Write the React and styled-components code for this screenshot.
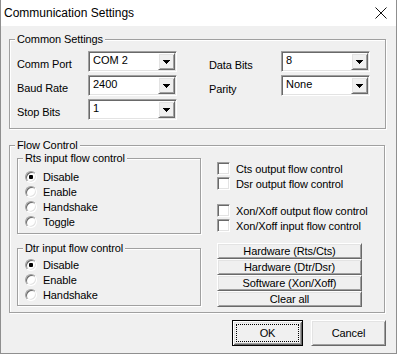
import styled, { createGlobalStyle } from 'styled-components';

const GlobalStyle = createGlobalStyle`
  html, body {
    margin: 0;
    padding: 0;
    background: #ffffff;
  }
  body {
    font-family: "Liberation Sans", Arial, sans-serif;
    color: #000;
  }
  *, *::before, *::after {
    box-sizing: border-box;
  }
`;

const DropArrow = () => (
  <svg width="7" height="4" viewBox="0 0 7 4" shapeRendering="crispEdges">
    <path d="M0 0h7v1h-1v1h-1v1h-1v1h-1v-1h-1v-1h-1v-1h-1z" fill="#000" />
  </svg>
);

const CloseIcon = () => (
  <svg width="12" height="12" viewBox="0 0 12 12">
    <path d="M0.5 0.5L11.5 11.5M11.5 0.5L0.5 11.5" stroke="#111" strokeWidth="1" fill="none" />
  </svg>
);

const ComboBox = ({ value }) => (
  <Combo>
    <ComboText>{value}</ComboText>
    <DropButton>
      <DropArrow />
    </DropButton>
  </Combo>
);

const Radio = ({ label, checked }) => (
  <RadioRow>
    <RadioCircle>{checked && <RadioDot />}</RadioCircle>
    <span>{label}</span>
  </RadioRow>
);

const Check = ({ label, gap }) => (
  <CheckRow $gap={gap}>
    <CheckBox />
    <span>{label}</span>
  </CheckRow>
);

function App() {
  return (
    <>
      <GlobalStyle />
      <Window>
        <TitleBar>
          <Title>Communication Settings</Title>
          <CloseButton>
            <CloseIcon />
          </CloseButton>
        </TitleBar>

        <Body>
          <GroupBox $height={90}>
            <Caption>Common Settings</Caption>
            <CommonBody>
              <FieldGrid $labelWidth={71}>
                <FieldLabel>Comm Port</FieldLabel>
                <ComboBox value="COM 2" />
                <FieldLabel>Baud Rate</FieldLabel>
                <ComboBox value="2400" />
                <FieldLabel>Stop Bits</FieldLabel>
                <ComboBox value="1" />
              </FieldGrid>
              <FieldGrid $labelWidth={72}>
                <FieldLabel $lower>Data Bits</FieldLabel>
                <ComboBox value="8" />
                <FieldLabel $lower>Parity</FieldLabel>
                <ComboBox value="None" />
              </FieldGrid>
            </CommonBody>
          </GroupBox>

          <GroupBox $height={168} $top={16} $right={1}>
            <Caption>Flow Control</Caption>
            <FlowBody>
              <LeftCol>
                <GroupBox $height={76}>
                  <Caption>Rts input flow control</Caption>
                  <RadioList $top={10}>
                    <Radio label="Disable" checked />
                    <Radio label="Enable" />
                    <Radio label="Handshake" />
                    <Radio label="Toggle" />
                  </RadioList>
                </GroupBox>
                <GroupBox $height={58}>
                  <Caption>Dtr input flow control</Caption>
                  <RadioList $top={8}>
                    <Radio label="Disable" checked />
                    <Radio label="Enable" />
                    <Radio label="Handshake" />
                  </RadioList>
                </GroupBox>
              </LeftCol>

              <RightCol>
                <Check label="Cts output flow control" />
                <Check label="Dsr output flow control" />
                <Check label="Xon/Xoff output flow control" gap={12} />
                <Check label="Xon/Xoff input flow control" />
                <ButtonStack>
                  <StackButton>Hardware (Rts/Cts)</StackButton>
                  <StackButton>Hardware (Dtr/Dsr)</StackButton>
                  <StackButton>Software (Xon/Xoff)</StackButton>
                  <StackButton>Clear all</StackButton>
                </ButtonStack>
              </RightCol>
            </FlowBody>
          </GroupBox>

          <Footer>
            <DialogButton $width={71} $default>OK</DialogButton>
            <DialogButton $width={75}>Cancel</DialogButton>
          </Footer>
        </Body>
      </Window>
    </>
  );
}

const raised = `
  border: 1px solid;
  border-color: #ffffff #696969 #696969 #ffffff;
  box-shadow: inset 1px 1px #e3e3e3, inset -1px -1px #a0a0a0;
  background: #f0f0f0;
`;

const sunken = `
  border: 1px solid;
  border-color: #a0a0a0 #ffffff #ffffff #a0a0a0;
  box-shadow: inset 1px 1px #696969, inset -1px -1px #e3e3e3;
  background: #ffffff;
`;

const Window = styled.div`
  width: 397px;
  height: 354px;
  display: flex;
  flex-direction: column;
  background: #f0f0f0;
  border: 1px solid #8f8f8f;
  border-top: none;
  font-size: 11px;
  letter-spacing: -0.1px;
`;

const TitleBar = styled.div`
  height: 26px;
  flex-shrink: 0;
  display: flex;
  align-items: center;
  justify-content: space-between;
  background: #ffffff;
  padding-left: 3px;
`;

const Title = styled.div`
  font-size: 12px;
  line-height: 26px;
  letter-spacing: 0;
`;

const CloseButton = styled.div`
  width: 30px;
  height: 26px;
  display: flex;
  align-items: center;
  justify-content: center;
`;

const Body = styled.div`
  flex: 1;
  display: flex;
  flex-direction: column;
  padding: 13px 10px 0 8px;
`;

const GroupBox = styled.div`
  position: relative;
  flex-shrink: 0;
  height: ${p => p.$height}px;
  margin-top: ${p => p.$top || 0}px;
  margin-right: ${p => p.$right || 0}px;
  border: 1px solid #a0a0a0;
  box-shadow: inset 1px 1px #ffffff, 1px 1px #ffffff;
`;

const Caption = styled.span`
  position: absolute;
  top: -7px;
  left: 5px;
  padding: 0 2px;
  line-height: 13px;
  background: #f0f0f0;
  white-space: nowrap;
`;

const CommonBody = styled.div`
  display: flex;
  gap: 32px;
  padding: 11px 0 0 7px;
`;

const FieldGrid = styled.div`
  display: grid;
  grid-template-columns: ${p => p.$labelWidth}px 89px;
  grid-auto-rows: 21px;
  row-gap: 3px;
`;

const FieldLabel = styled.div`
  line-height: 15px;
  padding-top: ${p => (p.$lower ? 7 : 6)}px;
  white-space: nowrap;
`;

const Combo = styled.div`
  display: flex;
  height: 21px;
  ${sunken}
`;

const ComboText = styled.div`
  flex: 1;
  padding: 2px 0 0 4px;
  line-height: 13px;
  letter-spacing: 0;
`;

const DropButton = styled.div`
  width: 17px;
  height: 17px;
  margin: 1px;
  display: flex;
  align-items: center;
  justify-content: center;
  ${raised}
`;

const FlowBody = styled.div`
  display: flex;
  gap: 16px;
  padding: 12px 0 0 7px;
`;

const LeftCol = styled.div`
  width: 184px;
  display: flex;
  flex-direction: column;
  gap: 14px;
`;

const RadioList = styled.div`
  display: flex;
  flex-direction: column;
  padding: ${p => p.$top}px 0 0 7px;
`;

const RadioRow = styled.div`
  height: 15px;
  display: flex;
  align-items: center;
  gap: 6px;
  white-space: nowrap;
`;

const RadioCircle = styled.div`
  width: 12px;
  height: 12px;
  flex-shrink: 0;
  border-radius: 50%;
  display: flex;
  align-items: center;
  justify-content: center;
  ${sunken}
`;

const RadioDot = styled.div`
  width: 4px;
  height: 4px;
  border-radius: 1px;
  background: #000;
`;

const RightCol = styled.div`
  width: 145px;
  display: flex;
  flex-direction: column;
  padding-top: 3px;
`;

const CheckRow = styled.div`
  height: 15px;
  margin-top: ${p => p.$gap || 0}px;
  display: flex;
  align-items: center;
  gap: 6px;
  white-space: nowrap;
`;

const CheckBox = styled.div`
  width: 13px;
  height: 13px;
  flex-shrink: 0;
  ${sunken}
`;

const ButtonStack = styled.div`
  display: flex;
  flex-direction: column;
  margin-top: 10px;
`;

const StackButton = styled.button`
  height: 16px;
  padding: 0;
  font: inherit;
  letter-spacing: inherit;
  color: #000;
  display: flex;
  align-items: center;
  justify-content: center;
  ${raised}
`;

const Footer = styled.div`
  display: flex;
  justify-content: flex-end;
  gap: 8px;
  margin-top: 7px;
`;

const DialogButton = styled.button`
  position: relative;
  width: ${p => p.$width}px;
  height: 26px;
  padding: 0;
  font: inherit;
  font-size: 11px;
  letter-spacing: inherit;
  color: #000;
  ${raised}
  ${p => p.$default && `
    border: 1px solid #000;
    box-shadow: inset 1px 1px #ffffff, inset -1px -1px #696969,
      inset 2px 2px #e3e3e3, inset -2px -2px #a0a0a0;
    &::after {
      content: '';
      position: absolute;
      inset: 3px;
      border: 1px dotted #000;
    }
  `}
`;

export default App;
